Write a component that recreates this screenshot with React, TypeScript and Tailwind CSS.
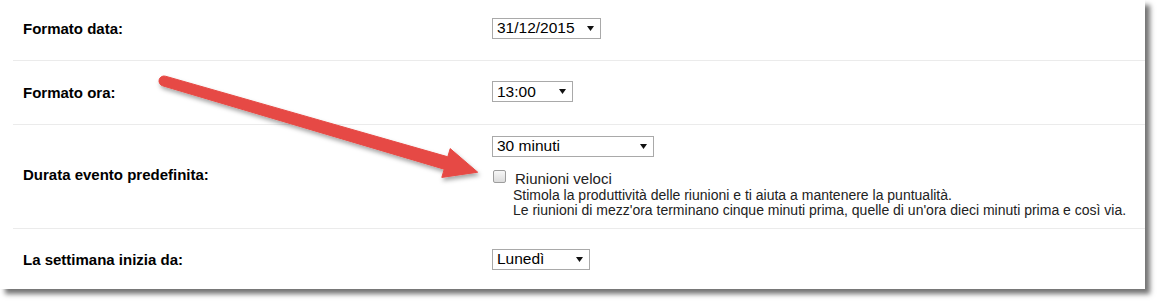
import React from "react";

function Caret() {
  return (
    <svg width="7" height="5" viewBox="0 0 7 5" className="shrink-0">
      <polygon points="0,0 7,0 3.5,5" fill="#111" />
    </svg>
  );
}

function FakeSelect({ value, width }: { value: string; width: string }) {
  return (
    <div
      className={`${width} flex h-[21px] items-center justify-between border border-[#a9a9a9] bg-white pl-[4px] pr-[6px] text-[15.5px] leading-none text-black`}
    >
      <span>{value}</span>
      <Caret />
    </div>
  );
}

function Arrow() {
  return (
    <svg
      width="1159"
      height="304"
      viewBox="0 0 1159 304"
      className="pointer-events-none absolute left-0 top-0"
    >
      <defs>
        <filter id="arrowShadow" x="-10%" y="-20%" width="130%" height="160%">
          <feDropShadow dx="1.5" dy="3" stdDeviation="2" floodColor="#000" floodOpacity="0.35" />
        </filter>
      </defs>
      <path
        d="M165.4,76.2 L447.8,156.8 L450.2,148.6 L477.7,172.2 L441.8,177.4 L444.2,169.2 L162.6,85.8 A5,5 0 0 1 165.4,76.2 Z"
        fill="#e64a45"
        strokeLinejoin="round"
        stroke="#e64a45"
        strokeWidth="1"
        filter="url(#arrowShadow)"
      />
    </svg>
  );
}

export default function App() {
  return (
    <div className="relative h-[304px] w-[1159px] overflow-hidden bg-white font-['Liberation_Sans',Arial,sans-serif]">
      <div className="h-[289px] w-[1145px] bg-white shadow-[5px_5px_5px_rgba(0,0,0,0.55)]">
        <div className="ml-[13px] flex flex-col">
          {/* Formato data */}
          <div className="flex h-[61px] items-center border-b border-[#ebebeb] pb-[4px]">
            <div className="w-[479px] pl-[10px] pt-[2px] text-[15px] font-bold text-black">
              Formato data:
            </div>
            <FakeSelect value="31/12/2015" width="w-[109px]" />
          </div>

          {/* Formato ora */}
          <div className="flex h-[64px] items-center border-b border-[#ebebeb] pb-[2px]">
            <div className="w-[479px] pl-[10px] pt-[3px] text-[15px] font-bold text-black">
              Formato ora:
            </div>
            <FakeSelect value="13:00" width="w-[81px]" />
          </div>

          {/* Durata evento */}
          <div className="flex h-[104px] items-center border-b border-[#ebebeb]">
            <div className="mb-[2px] w-[479px] pl-[10px] text-[15px] font-bold text-black">
              Durata evento predefinita:
            </div>
            <div className="flex flex-col">
              <FakeSelect value="30 minuti" width="w-[162px]" />
              <div className="mt-[13px] flex h-[16px] items-start">
                <div className="ml-[1px] h-[13px] w-[13px] rounded-[2px] border border-[#9d9d9d] bg-linear-to-b from-[#f7f7f7] to-[#dcdcdc]" />
                <span className="ml-[9px] mt-[1px] text-[15px] leading-[15px] text-[#222]">
                  Riunioni veloci
                </span>
              </div>
              <div className="mt-[2px] pl-[21px] text-[14px] leading-[15px] text-[#222]">
                <div className="whitespace-nowrap">
                  Stimola la produttività delle riunioni e ti aiuta a mantenere la puntualità.
                </div>
                <div className="whitespace-nowrap">
                  Le riunioni di mezz'ora terminano cinque minuti prima, quelle di un'ora dieci minuti prima e così via.
                </div>
              </div>
            </div>
          </div>

          {/* La settimana */}
          <div className="flex h-[60px] items-center">
            <div className="w-[479px] pl-[10px] pt-[3px] text-[15px] font-bold text-black">
              La settimana inizia da:
            </div>
            <FakeSelect value="Lunedì" width="w-[98px]" />
          </div>
        </div>
      </div>
      <Arrow />
    </div>
  );
}
